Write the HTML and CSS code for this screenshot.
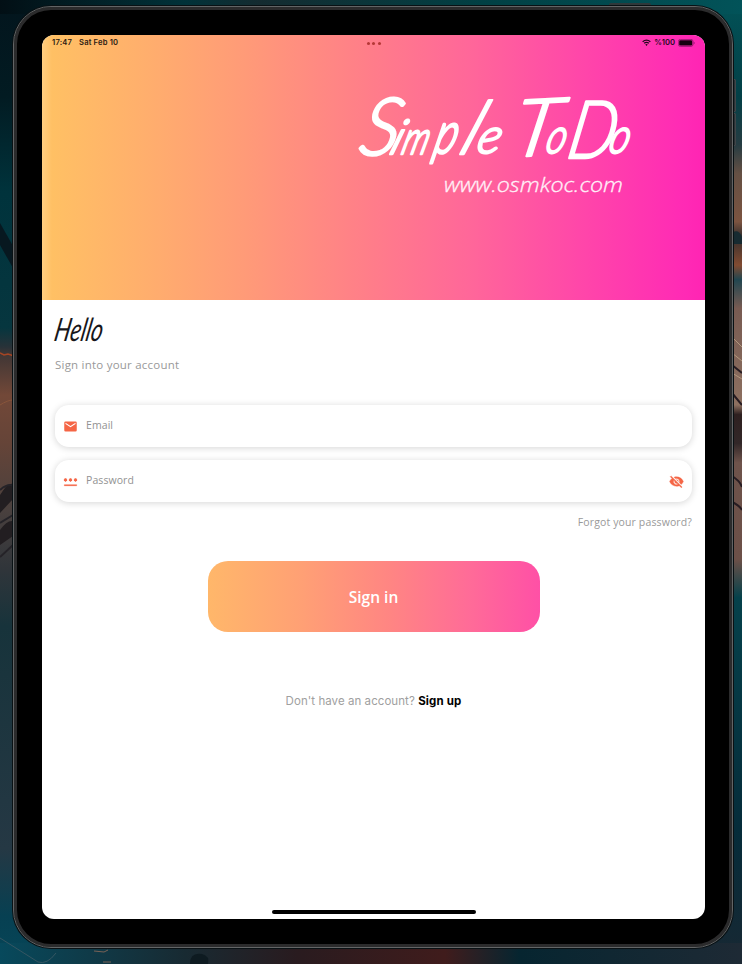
FILE: index.html
```html
<!DOCTYPE html>
<html lang="en">
<head>
<meta charset="utf-8">
<title>Simple ToDo</title>
<link rel="stylesheet" href="styles.css">
</head>
<body>
<svg class="wallpaper" viewBox="0 0 742 964" aria-hidden="true">
  <defs>
    <linearGradient id="left" x2="0" y2="1">
      <stop offset="0" stop-color="#03151d"/><stop offset=".1" stop-color="#021b22"/><stop offset=".2" stop-color="#00333c"/><stop offset=".34" stop-color="#06363f"/><stop offset=".36" stop-color="#283238"/><stop offset=".367" stop-color="#3f3635"/><stop offset=".41" stop-color="#724838"/><stop offset=".46" stop-color="#654438"/><stop offset=".53" stop-color="#49403e"/><stop offset=".59" stop-color="#30353a"/><stop offset=".65" stop-color="#17333b"/><stop offset=".88" stop-color="#253844"/><stop offset=".95" stop-color="#074052"/><stop offset="1" stop-color="#064658"/>
    </linearGradient>
    <linearGradient id="right" x2="0" y2="1">
      <stop offset="0" stop-color="#025257"/><stop offset=".1" stop-color="#034047"/><stop offset=".15" stop-color="#263c42"/><stop offset=".18" stop-color="#655044"/><stop offset=".23" stop-color="#7c5440"/><stop offset=".245" stop-color="#342e2d"/><stop offset=".275" stop-color="#824b31"/><stop offset=".29" stop-color="#214650"/><stop offset=".32" stop-color="#785b52"/><stop offset=".42" stop-color="#8d7060"/><stop offset=".43" stop-color="#2e2020"/><stop offset=".46" stop-color="#322728"/><stop offset=".48" stop-color="#6e534b"/><stop offset=".58" stop-color="#6c5048"/><stop offset=".62" stop-color="#05414b"/><stop offset=".86" stop-color="#052c3a"/><stop offset="1" stop-color="#182833"/>
    </linearGradient>
    <linearGradient id="bottom">
      <stop offset="0" stop-color="#07495c"/><stop offset=".25" stop-color="#182a32"/><stop offset=".4" stop-color="#291b1f"/><stop offset=".6" stop-color="#401c1c"/><stop offset=".7" stop-color="#062530"/><stop offset="1" stop-color="#1e2a35"/>
    </linearGradient>
    <linearGradient id="top">
      <stop offset="0" stop-color="#020f15"/><stop offset=".25" stop-color="#013239"/><stop offset=".35" stop-color="#142b30"/><stop offset=".65" stop-color="#014044"/><stop offset="1" stop-color="#025359"/>
    </linearGradient>
  </defs>
  <path fill="url(#left)" d="M0 0h50v964H0z"/>
  <path fill="url(#right)" d="M690 0h52v964h-52z"/>
  <path fill="url(#top)" d="M0 0h742v14H0z"/>
  <path fill="url(#bottom)" d="M0 943h742v21H0z"/>
  <path fill="#071820" d="M0 223l13 23v22L0 245z"/>
  <path fill="none" stroke="#a54524" stroke-width="1.5" d="M0 353l4 2 4-1 6 2"/>
  <path fill="none" stroke="#88553b" d="M0 405q8-5 13-5"/>
  <path fill="#221e21" d="M0 495q8-13 13-11v15L0 513zM0 530q7-10 13-9v15L0 545z"/>
  <path fill="none" stroke="#252328" stroke-width="2" d="M0 490q8-7 14-4M0 523l13-8M0 557l13-12"/>
  <path fill="#172b31" d="M733 232q6-3 9 5v7h-9z"/>
  <path fill="none" stroke="#b1977d" d="M732 337l10 10M732 353l10 8M732 373l10 6"/>
  <path fill="none" stroke="#271c22" stroke-width="2" d="M732 365l10 8M732 393l10 12M732 476q8 5 10 11M732 502q7 3 10 8"/>
  <path fill="#0e1b21" d="M190 964q0-12 12-10 8 2 6 10z"/>
  <path fill="none" stroke="#786256" d="M94 951l10 1 4-2M103 962h8"/>
  <path fill="none" stroke="#355662" d="M0 938l38 24q9 3 18-9"/>
</svg>
<div class="power"></div>
<div class="volume"><i></i><i></i></div>
<main class="tablet">
  <div class="screen">
    <header class="hero">
      <div class="status">
        <div class="clock"><span>17:47</span><span>Sat Feb 10</span></div>
        <div class="dots"><i></i><i></i><i></i></div>
        <div class="indicators">
          <svg class="wifi" viewBox="0 0 20 16" aria-hidden="true"><g fill="none" stroke="#24071c" stroke-width="2.8"><path d="M1.4 6.2q8.600-7 17.200 0"/><path d="M4.700 9.700q5.300-4 10.600 0"/></g><path fill="#24071c" d="M7.200 12.300q2.800-2 5.600 0L10 15.500z"/></svg>
          <span>%100</span>
          <svg class="battery" viewBox="0 0 17 8" aria-hidden="true"><rect x=".4" y=".4" width="14.600" height="7" rx="2" fill="none" stroke="#7d1460" stroke-width=".7"/><rect x="1.200" y="1.200" width="13" height="5.400" rx="1.300" fill="#16000f"/><path fill="#7d1460" d="M15.800 2.700q1.500 1.200 0 2.500z"/></svg>
        </div>
      </div>
      <svg class="logo" viewBox="0 0 310 130" role="img" aria-label="Simple ToDo">
        <g class="logo-name">
          <text font-size="80" transform="translate(17 75) skewX(-12) scale(.98 1)">S</text>
          <text font-size="48" transform="translate(48 74) skewX(-20)">i</text>
          <text font-size="46" transform="translate(60 74) skewX(-16) scale(.72 1)">m</text>
          <text font-size="48" transform="translate(92 73) skewX(-14) scale(.9 1.2)">p</text>
          <text font-size="74" transform="translate(117 74) skewX(-22)">l</text>
          <text font-size="49" transform="translate(135 73) skewX(-14) scale(1.02 1)">e</text>
          <text font-size="79" transform="translate(169 77) rotate(-3) skewX(-14) scale(1.1 1)">T</text>
          <text font-size="49" transform="translate(204 73) skewX(-14) scale(.78 1)">o</text>
          <text font-size="80" transform="translate(225 78) skewX(-11) scale(.84 1)">D</text>
          <text font-size="49" transform="translate(267 73) skewX(-14) scale(.8 1)">o</text>
        </g>
        <text class="logo-url" x="104" y="112" textLength="179" lengthAdjust="spacingAndGlyphs">www.osmkoc.com</text>
      </svg>
    </header>
    <form class="form">
      <h1>Hello</h1>
      <p class="lead">Sign into your account</p>
      <label class="field">
        <svg viewBox="0 0 24 24" aria-hidden="true"><path d="M20 4H4a2 2 0 0 0-2 2v12a2 2 0 0 0 2 2h16a2 2 0 0 0 2-2V6a2 2 0 0 0-2-2zm0 4-8 5-8-5V6l8 5 8-5v2z"/></svg>
        <span>Email</span>
      </label>
      <label class="field">
        <svg viewBox="0 0 24 24" aria-hidden="true"><g stroke="#f56545"><path stroke-width=".4" d="M2 17h20v2H2z"/><path stroke-width="1.800" d="M4 6.800v5.400M1.600 8.100l4.800 2.800M6.400 8.100l-4.800 2.800M12 6.800v5.400M9.600 8.100l4.800 2.800M14.400 8.100l-4.800 2.800M20 6.800v5.400M17.600 8.100l4.800 2.800M22.400 8.100l-4.800 2.800"/></g></svg>
        <span>Password</span>
        <svg class="eye" viewBox="0 0 24 24" aria-hidden="true"><path stroke="#f56545" stroke-width=".6" d="M12 7a5 5 0 0 1 4.640 6.830l2.920 2.920A11.800 11.800 0 0 0 22.990 12C21.260 7.610 16.990 4.500 11.990 4.500c-1.400 0-2.740.25-3.980.7l2.160 2.160C10.740 7.130 11.350 7 12 7zM2 4.270l2.740 2.740A11.800 11.800 0 0 0 1 12c1.730 4.390 6 7.500 11 7.500 1.550 0 3.030-.3 4.380-.84L19.730 22 21 20.730 3.270 3 2 4.270zM7.530 9.800l1.550 1.550A3 3 0 0 0 12.650 14.920l1.550 1.550A5 5 0 0 1 7.530 9.800zm4.310-.78 3.150 3.150.02-.16a3 3 0 0 0-3.170-2.990z"/></svg>
      </label>
      <p class="forgot">Forgot your password?</p>
      <button class="submit" type="button"><span>Sign in</span></button>
      <p class="signup">Don't have an account? <b>Sign up</b></p>
    </form>
    <div class="home-bar"></div>
  </div>
</main>
</body>
</html>
```
FILE: styles.css
```css
* { box-sizing: border-box; }
body {
  margin: 0;
  width: 742px;
  height: 964px;
  padding: 6px 9px 16px 13px;
  overflow: hidden;
  background: #07242c;
  font-family: "Open Sans", "Noto Sans", sans-serif;
}
.wallpaper { position: absolute; inset: 0; z-index: -2; width: 742px; height: 964px; }
.power { position: absolute; left: 609px; top: 3px; width: 42px; height: 6px; border-radius: 2px; background: #30383a; z-index: -1; }
.volume { position: absolute; left: 730px; top: 79px; z-index: -1; display: grid; gap: 1px; }
.volume i { display: block; width: 6px; height: 33px; border: 1px solid #404548; background: #293135; border-radius: 1px; }
.tablet {
  width: 720px;
  height: 942px;
  padding: 28px 27px 28px 28px;
  border: 1px solid #626465;
  border-radius: 38px;
  background: #000;
  box-shadow: inset 0 0 0 3px #2b2b2c, 0 0 0 1px #091114;
  display: flex;
}
.screen { flex: 1; height: 884px; border-radius: 12px; overflow: hidden; background: #fff; display: flex; flex-direction: column; }
.hero {
  height: 265px;
  flex: none;
  background: linear-gradient(90deg, #ffcd80 0, #ffc064 1.500%, #ffae6d 16%, #ff9a78 31%, #ff8187 47%, #ff669a 65%, #ff47a9 81%, #ff2ab5 97%, #ff24b3);
  display: flex;
  flex-direction: column;
}
.status { height: 16px; padding: 0 10px; display: grid; grid-template-columns: 1fr auto 1fr; align-items: center; font: 600 7.600px/16px Inter, sans-serif; letter-spacing: .17px; color: #2b1a12; }
.clock { display: flex; gap: 7px; }
.dots { display: flex; gap: 2.500px; }
.dots i { width: 3px; height: 3px; border-radius: 50%; background: #b53836; }
.indicators { display: flex; justify-content: flex-end; align-items: center; gap: 3px; color: #24071c; letter-spacing: 0; }
.wifi { width: 9px; height: 7.200px; }
.battery { width: 17px; height: 8px; }
.logo { width: 310px; height: 130px; margin: 29px 0 0 298px; overflow: visible; }
.logo-name { font-family: Lato, sans-serif; font-style: italic; font-weight: 300; fill: #fff; stroke: #fff; stroke-width: 2.400; stroke-linejoin: round; }
.logo-url { font: italic 300 20.500px "Open Sans", sans-serif; fill: #fff0f8; stroke: #fff0f8; stroke-width: .3; }
.form { flex: 1; padding: 0 13px; display: flex; flex-direction: column; }
h1 { margin: 10px 0 0; height: 37px; font: italic 400 32px/37px Lato, sans-serif; color: #17171b; transform: translateX(-2px) scaleX(.7) skewX(-16deg); transform-origin: 0 85%; }
p { margin: 0; }
.lead { margin-top: 9px; font-size: 11.500px; line-height: 18px; letter-spacing: .22px; color: #999; }
.field { height: 42px; margin-top: 31px; padding: 0 8px; border-radius: 14px; background: #fff; box-shadow: 0 1px 7px rgba(0, 0, 0, .17); display: flex; align-items: center; gap: 8px; font-size: 10.500px; color: #929292; }
.field + .field { margin-top: 13px; }
.field svg { width: 15px; height: 15px; fill: #f56545; flex: none; }
.field span { flex: 1; position: relative; top: -1px; letter-spacing: .08px; }
.forgot { margin-top: 12px; font-size: 10.500px; line-height: 16px; letter-spacing: .13px; color: #999; text-align: right; }
.submit { width: 332px; height: 71px; margin: 31px auto 0; padding: 0; border: 0; border-radius: 20px; color: #fff; font: 600 15.500px "Open Sans", sans-serif; background: linear-gradient(90deg, #ffb76a, #ffa174 27%, #ff8583 55%, #ff6b98 79%, #ff50a6); }
.signup { margin-top: 60px; text-align: center; font: 400 11.500px/18px Inter, sans-serif; color: #a0a0a0; letter-spacing: .06px; }
.signup b { color: #000; font-weight: 700; letter-spacing: .15px; }
.home-bar { width: 204px; height: 4px; margin: 0 auto 5px; border-radius: 2px; background: #000; }
```
